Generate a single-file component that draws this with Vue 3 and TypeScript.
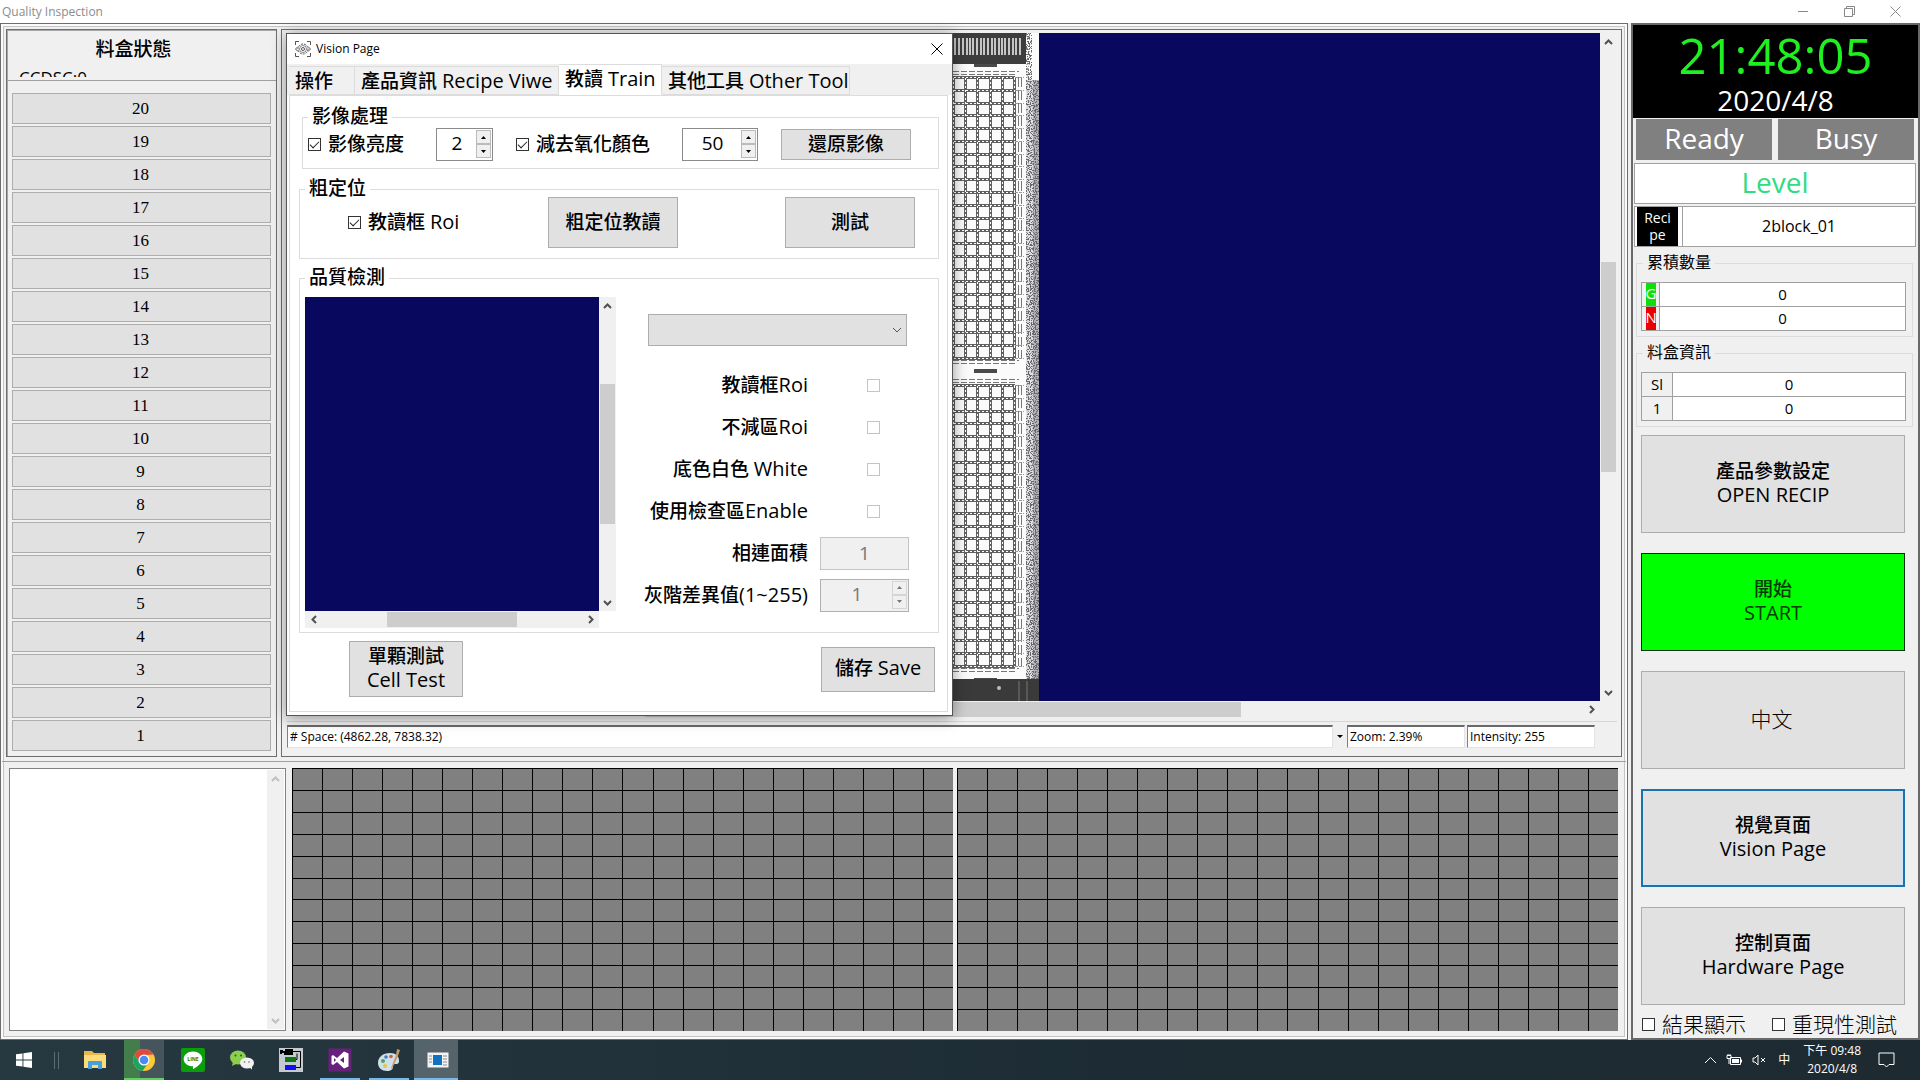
<script setup lang="ts">
import { ref } from 'vue'

const slots: number[] = Array.from({ length: 20 }, (_, i) => 20 - i)
const gridCells = 22 * 12

const brightnessOn = ref(true)
const oxideOn = ref(true)
const roiOn = ref(true)
const brightness = ref('2')
const oxide = ref('50')

const flags = [
  { id: 'teach-roi', zh: '教讀框', en: 'Roi' },
  { id: 'skip-roi', zh: '不減區', en: 'Roi' },
  { id: 'white-base', zh: '底色白色 ', en: 'White' },
  { id: 'use-area', zh: '使用檢查區', en: 'Enable' },
]

const actions = [
  { zh: '產品參數設定', en: 'OPEN RECIP', kind: '' },
  { zh: '開始', en: 'START', kind: 'start' },
  { zh: '中文', en: '', kind: 'lang' },
  { zh: '視覺頁面', en: 'Vision Page', kind: 'focused' },
  { zh: '控制頁面', en: 'Hardware Page', kind: '' },
]

// Die matrix drawn on the scanned strip
const pitchY = 281 / 22
const rowLines: number[] = Array.from({ length: 23 }, (_, i) => Math.round(i * pitchY))
const colLines: number[] = [0, 12, 24, 37, 49, 61]
const blocks: number[] = [44, 352]
const barcode: number[] = [2, 6, 10, 14, 17, 20, 24, 28, 31, 35, 39, 42, 46, 49, 52, 56, 60, 63, 67]
</script>

<template>
  <div class="desktop">
    <header class="titlebar">
      <span>Quality Inspection</span>
      <div class="win-controls">
        <button type="button" aria-label="Minimize"><svg width="11" height="11" viewBox="0 0 11 11"><path d="M0 5.5h10" /></svg></button>
        <button type="button" aria-label="Restore"><svg width="11" height="11" viewBox="0 0 11 11"><path d="M.5 2.5h8v8h-8zM2.500 2.500v-2h8v8h-2" /></svg></button>
        <button type="button" aria-label="Close"><svg width="11" height="11" viewBox="0 0 11 11"><path d="M.5.5l10 10M10.500.5l-10 10" /></svg></button>
      </div>
    </header>

    <div class="workspace">
      <main class="frame">
        <div class="upper">
          <section class="magazine">
            <div class="magazine-head">
              <h2>料盒狀態</h2>
              <p>CCDSC:0</p>
            </div>
            <div class="slot-list">
              <button v-for="n in slots" :key="n" type="button" class="slot">{{ n }}</button>
            </div>
          </section>

          <section class="viewer">
            <div class="view-grid">
              <div class="canvas">
                <svg class="scan" width="86" height="668" viewBox="0 0 86 668" preserveAspectRatio="none">
                  <defs>
                    <filter id="grain" x="0" y="0" width="100%" height="100%" color-interpolation-filters="sRGB">
                      <feTurbulence type="fractalNoise" baseFrequency="0.8" numOctaves="1" seed="4" />
                      <feColorMatrix values="0 0 0 0 .4  0 0 0 0 .4  0 0 0 0 .42  14 0 0 0 -6.800" />
                    </filter>
                    <g id="dies" fill="none">
                      <path d="M0-5.500H66M0-2.500H62M0 283.500H66M0 286.500H62" stroke="#777" stroke-dasharray="6 2" />
                      <g stroke="#606060" stroke-width="3">
                        <path v-for="y in rowLines" :key="'r' + y" :d="`M0 ${y + 0.5}H62`" />
                        <path v-for="x in colLines" :key="'c' + x" :d="`M${x + 0.5} 0V281`" />
                      </g>
                      <g stroke="#fff" stroke-dasharray="2 2">
                        <path v-for="y in rowLines" :key="'rd' + y" :d="`M1 ${y + 0.5}H62`" />
                        <path v-for="x in colLines" :key="'cd' + x" :d="`M${x + 0.5} 1V281`" />
                      </g>
                      <path d="M65.500 0V281M68.500 0V281" stroke="#777" stroke-dasharray="10 3" />
                      <path v-for="y in rowLines" :key="'t' + y" :d="`M62 ${y + 0.5}h9`" stroke="#999" stroke-dasharray="3 1" />
                    </g>
                  </defs>
                  <rect width="86" height="668" fill="#fbfbfb" />
                  <rect width="73" height="31" fill="#3d3d3d" />
                  <path v-for="x in barcode" :key="x" :d="`M${x} 5V22`" stroke="#f4f4f4" stroke-width="1.500" />
                  <path d="M21 31h23v3H21zM21 336h23v4H21zM21 645h23v2H21z" fill="#4a4a4a" />
                  <use v-for="y in blocks" :key="y" href="#dies" :y="y" />
                  <rect x="73" y="47" width="13" height="600" fill="#e2e2e2" />
                  <rect x="80" y="47" width="6" height="600" fill="#b4b4bc" />
                  <rect x="73" y="0" width="6" height="47" filter="url(#grain)" />
                  <rect x="73" y="47" width="13" height="600" filter="url(#grain)" />
                  <rect y="646" width="86" height="22" fill="#3a3a3a" />
                  <path d="M74 648v20M66 648v20" stroke="#777" />
                  <circle cx="46" cy="655" r="2" fill="#bbb" />
                </svg>
              </div>
              <div class="scroll vertical">
                <button type="button" aria-label="Scroll up"><svg width="9" height="6" viewBox="0 0 9 6"><path d="M1 5l3.500-3.500L8 5" /></svg></button>
                <div class="track"><i style="flex-grow: 212"></i><b style="flex-grow: 210"></b><i style="flex-grow: 212"></i></div>
                <button type="button" aria-label="Scroll down"><svg width="9" height="6" viewBox="0 0 9 6"><path d="M1 1l3.500 3.500L8 1" /></svg></button>
              </div>
              <div class="scroll horizontal">
                <button type="button" aria-label="Scroll left"><svg width="6" height="9" viewBox="0 0 6 9"><path d="M5 1L1.500 4.500 5 8" /></svg></button>
                <div class="track"><i style="flex-grow: 341"></i><b style="flex-grow: 596"></b><i style="flex-grow: 342"></i></div>
                <button type="button" aria-label="Scroll right"><svg width="6" height="9" viewBox="0 0 6 9"><path d="M1 1l3.500 3.500L1 8" /></svg></button>
              </div>
            </div>
            <div class="status">
              <span class="well wide"># Space: (4862.28, 7838.32)</span>
              <button type="button" class="drop" aria-label="Units"><svg width="6" height="3" viewBox="0 0 6 3"><path d="M0 0h6L3 3z" /></svg></button>
              <span class="well zoom">Zoom: 2.39%</span>
              <span class="well intensity">Intensity: 255</span>
            </div>

            <div class="dialog" role="dialog" aria-labelledby="dialog-title">
              <div class="dialog-title">
                <svg width="16" height="16" viewBox="0 0 16 16" fill="none" stroke="#555">
                  <path d="M.5 4V.5H4M12 .5h3.500V4M15.500 12v3.500H12M4 15.500H.5V12" />
                  <circle cx="8" cy="8" r="5" stroke-dasharray="2 1" />
                  <circle cx="8" cy="8" r="1.500" />
                  <circle cx="8" cy="8" r="3.500" stroke-width=".7" />
                  <path d="M.5 8L3 5.500M.5 8L3 10.500M15.500 8L13 5.500M15.500 8L13 10.500" />
                </svg>
                <span id="dialog-title">Vision Page</span>
                <button type="button" aria-label="Close"><svg width="12" height="12" viewBox="0 0 12 12"><path d="M.5.5l11 11M11.500.5l-11 11" /></svg></button>
              </div>
              <div class="tabs" role="tablist">
                <button type="button" role="tab" class="tab t-op">操作</button>
                <button type="button" role="tab" class="tab t-info">產品資訊 <span class="en">Recipe Viwe</span></button>
                <button type="button" role="tab" class="tab t-train active" aria-selected="true">教讀 <span class="en">Train</span></button>
                <button type="button" role="tab" class="tab t-tool">其他工具 <span class="en">Other Tool</span></button>
              </div>
              <div class="page">
                <fieldset class="group image-group">
                  <legend>影像處理</legend>
                  <div class="row image-row">
                    <label class="check"><input v-model="brightnessOn" type="checkbox" /><span>影像亮度</span></label>
                    <div class="spin narrow">
                      <input v-model="brightness" type="text" aria-label="影像亮度" />
                      <div class="arrows">
                        <button type="button" aria-label="Increase"><svg width="5" height="3" viewBox="0 0 5 3"><path d="M0 3h5L2.500 0z" /></svg></button>
                        <button type="button" aria-label="Decrease"><svg width="5" height="3" viewBox="0 0 5 3"><path d="M0 0h5L2.500 3z" /></svg></button>
                      </div>
                    </div>
                    <label class="check"><input v-model="oxideOn" type="checkbox" /><span>減去氧化顏色</span></label>
                    <div class="spin">
                      <input v-model="oxide" type="text" aria-label="減去氧化顏色" />
                      <div class="arrows">
                        <button type="button" aria-label="Increase"><svg width="5" height="3" viewBox="0 0 5 3"><path d="M0 3h5L2.500 0z" /></svg></button>
                        <button type="button" aria-label="Decrease"><svg width="5" height="3" viewBox="0 0 5 3"><path d="M0 0h5L2.500 3z" /></svg></button>
                      </div>
                    </div>
                    <button type="button" class="btn low">還原影像</button>
                  </div>
                </fieldset>

                <fieldset class="group coarse-group">
                  <legend>粗定位</legend>
                  <div class="row coarse-row">
                    <label class="check"><input v-model="roiOn" type="checkbox" /><span>教讀框 <span class="en">Roi</span></span></label>
                    <button type="button" class="btn tall">粗定位教讀</button>
                    <button type="button" class="btn tall last">測試</button>
                  </div>
                </fieldset>

                <fieldset class="group quality-group">
                  <legend>品質檢測</legend>
                  <div class="quality">
                    <div class="view-grid preview">
                      <div class="canvas"></div>
                      <div class="scroll vertical">
                        <button type="button" aria-label="Scroll up"><svg width="9" height="6" viewBox="0 0 9 6"><path d="M1 5l3.500-3.500L8 5" /></svg></button>
                        <div class="track"><i style="flex-grow: 70"></i><b style="flex-grow: 140"></b><i style="flex-grow: 70"></i></div>
                        <button type="button" aria-label="Scroll down"><svg width="9" height="6" viewBox="0 0 9 6"><path d="M1 1l3.500 3.500L8 1" /></svg></button>
                      </div>
                      <div class="scroll horizontal">
                        <button type="button" aria-label="Scroll left"><svg width="6" height="9" viewBox="0 0 6 9"><path d="M5 1L1.500 4.500 5 8" /></svg></button>
                        <div class="track"><i style="flex-grow: 65"></i><b style="flex-grow: 130"></b><i style="flex-grow: 65"></i></div>
                        <button type="button" aria-label="Scroll right"><svg width="6" height="9" viewBox="0 0 6 9"><path d="M1 1l3.500 3.500L1 8" /></svg></button>
                      </div>
                    </div>
                    <div class="params">
                      <div class="combo">
                        <select disabled aria-label="品質檢測"></select>
                        <svg width="10" height="6" viewBox="0 0 10 6"><path d="M1 1l4 4 4-4" /></svg>
                      </div>
                      <div class="param-list">
                        <template v-for="f in flags" :key="f.id">
                          <label :for="f.id">{{ f.zh }}<span class="en">{{ f.en }}</span></label>
                          <input :id="f.id" type="checkbox" disabled />
                        </template>
                        <label for="area">相連面積</label>
                        <input id="area" class="plain" type="text" value="1" disabled />
                        <label for="grey-diff">灰階差異值<span class="en">(1~255)</span></label>
                        <div class="spin off">
                          <input id="grey-diff" type="text" value="1" disabled />
                          <div class="arrows">
                            <button type="button" disabled aria-label="Increase"><svg width="5" height="3" viewBox="0 0 5 3"><path d="M0 3h5L2.500 0z" /></svg></button>
                            <button type="button" disabled aria-label="Decrease"><svg width="5" height="3" viewBox="0 0 5 3"><path d="M0 0h5L2.500 3z" /></svg></button>
                          </div>
                        </div>
                      </div>
                    </div>
                  </div>
                </fieldset>

                <div class="page-foot">
                  <button type="button" class="btn cell-test">單顆測試<br /><span class="en">Cell Test</span></button>
                  <button type="button" class="btn save">儲存 <span class="en">Save</span></button>
                </div>
              </div>
            </div>
          </section>
        </div>

        <div class="lower">
          <div class="log">
            <div class="scroll vertical idle">
              <button type="button" disabled aria-label="Scroll up"><svg width="9" height="6" viewBox="0 0 9 6"><path d="M1 5l3.500-3.500L8 5" /></svg></button>
              <button type="button" disabled aria-label="Scroll down"><svg width="9" height="6" viewBox="0 0 9 6"><path d="M1 1l3.500 3.500L8 1" /></svg></button>
            </div>
          </div>
          <div v-for="m in 2" :key="m" class="map"><i v-for="c in gridCells" :key="c"></i></div>
        </div>
      </main>

      <aside class="side">
        <div class="clock">
          <time class="time">21:48:05</time>
          <time class="date">2020/4/8</time>
        </div>
        <div class="lamps"><span>Ready</span><span>Busy</span></div>
        <div class="level">Level</div>
        <div class="recipe"><span class="recipe-tag"><b>Reci<br />pe</b></span><span class="recipe-name">2block_01</span></div>
        <fieldset class="group side-group">
          <legend>累積數量</legend>
          <table class="counts">
            <tbody>
              <tr><th scope="row"><span class="good">G</span></th><td>0</td></tr>
              <tr><th scope="row"><span class="bad">N</span></th><td>0</td></tr>
            </tbody>
          </table>
        </fieldset>
        <fieldset class="group side-group">
          <legend>料盒資訊</legend>
          <table class="info">
            <tbody>
              <tr><th scope="row">Sl</th><td>0</td></tr>
              <tr><th scope="row">1</th><td>0</td></tr>
            </tbody>
          </table>
        </fieldset>
        <div class="actions">
          <button v-for="a in actions" :key="a.zh" type="button" class="btn big" :class="a.kind">
            {{ a.zh }}<template v-if="a.en"><br /><span class="en">{{ a.en }}</span></template>
          </button>
        </div>
        <div class="toggles">
          <label><input type="checkbox" />結果顯示</label>
          <label><input type="checkbox" />重現性測試</label>
        </div>
      </aside>
    </div>

    <footer class="taskbar">
      <button type="button" class="start-menu" aria-label="Start">
        <svg width="16" height="16" viewBox="0 0 16 16" fill="#fff"><path d="M0 2.300L6.500 1.400v6.100H0zM7.400 1.300L16 0v7.500H7.400zM0 8.400h6.500v6.200L0 13.700zM7.400 8.400H16V16l-8.600-1.200z" /></svg>
      </button>
      <span class="grip"></span>
      <div class="apps">
        <button type="button" aria-label="File Explorer">
          <svg width="24" height="24" viewBox="0 0 24 24"><path d="M1 3h8l2 2h11v15H1z" fill="#e9b64c" /><path d="M1 7h22v13H1z" fill="#fbdc7c" /><path d="M5 21v-7q0-1 1-1h12q1 0 1 1v7h-4v-4H9v4z" fill="#4b9fd8" /></svg>
        </button>
        <button type="button" class="chrome" aria-label="Chrome">
          <svg width="24" height="24" viewBox="0 0 24 24"><circle cx="12" cy="12" r="11" fill="#fbc937" /><path d="M2.500 6.500A11 11 0 0 1 21.500 6.500L12 7 7.500 14.500z" fill="#dd4b3e" /><path d="M2.500 6.500A11 11 0 0 0 10.500 22.900L16.500 14.500H7.500z" fill="#1da462" /><circle cx="12" cy="12" r="5.500" fill="#fff" /><circle cx="12" cy="12" r="4.300" fill="#4a8af4" /></svg>
        </button>
        <button type="button" aria-label="LINE">
          <svg width="24" height="24" viewBox="0 0 24 24"><rect width="24" height="24" rx="2" fill="#0a9f0a" /><path d="M12 3.500c5.200 0 9.300 3.300 9.300 7.400 0 3.600-4 6.800-8.800 10.100-.8.400-.6-.7-.5-2.700C6.800 18.300 2.700 15 2.700 10.900S6.800 3.500 12 3.500z" fill="#fff" /><text x="12" y="13" text-anchor="middle" font-size="5" font-weight="700" fill="#0a7f0a">LINE</text></svg>
        </button>
        <button type="button" aria-label="WeChat">
          <svg width="24" height="24" viewBox="0 0 24 24"><ellipse cx="8" cy="9.500" rx="8" ry="7" fill="#8ccf4d" /><path d="M3 14l-1 4 4-2z" fill="#8ccf4d" /><circle cx="5.500" cy="7.500" r="1" fill="#37521d" /><circle cx="11" cy="7.500" r="1" fill="#37521d" /><ellipse cx="17" cy="15" rx="7" ry="5.500" fill="#f2f2f2" /><path d="M19 19l3 2.500v-4z" fill="#f2f2f2" /><circle cx="14.500" cy="14" r=".8" fill="#666" /><circle cx="19" cy="14" r=".8" fill="#666" /></svg>
        </button>
        <button type="button" aria-label="Camera tool">
          <svg width="24" height="24" viewBox="0 0 24 24"><path d="M0 0h24v24H0z" fill="#c5c9d0" /><path d="M1 2h3v1h2V1h8v6H5V5H3v1H1z" /><path d="M6 9h11v5H6z" fill="#087a10" /><path d="M6 17h11v5H6z" fill="#1010f0" /><path d="M14 3.500h7.500v16H17M18 5.500v6h-1" fill="none" stroke="#000" /></svg>
        </button>
        <button type="button" class="running" aria-label="Visual Studio">
          <svg width="24" height="24" viewBox="0 0 24 24"><path d="M.5.500h23v23H.5z" fill="#68217a" /><path d="M16 3.500l4.500 2v13l-4.500 2-7-6.500-4 3-1.500-1V8l1.500-1 4 3zM16 9l-4 3 4 3zM6 10v4l2-2z" fill="#fff" fill-rule="evenodd" /></svg>
        </button>
        <button type="button" class="running" aria-label="Paint">
          <svg width="24" height="24" viewBox="0 0 24 24"><path d="M1 15C1 9 6 5 13 5c6 0 9 3 9 8 0 3-2 3-4 3s-2 1-2 3-2 4-6 4c-5 0-9-3-9-8z" fill="#cfe0ea" /><circle cx="6" cy="13" r="2" fill="#57a25a" /><circle cx="9" cy="9" r="1.800" fill="#3e7fc4" /><circle cx="14" cy="8.500" r="1.800" fill="#d75b45" /><circle cx="8" cy="18" r="2" fill="#e3c34a" /><path d="M20 1l3 1-2 6-6 13-1-1 5-13z" fill="#c59a68" /></svg>
        </button>
        <button type="button" class="running current" aria-label="Vision application">
          <svg width="22" height="16" viewBox="0 0 22 16"><path d="M.5.500h21v15H.5z" fill="#f3f3f3" /><path d="M6 3h9v10H6z" fill="#1172c4" /><path d="M2 4h3M2 7h3M2 10h3M16 4h4M16 7h4M16 10h4M16 13h4" stroke="#8a8a8a" /></svg>
        </button>
      </div>
      <div class="tray">
        <svg width="13" height="8" viewBox="0 0 13 8"><path d="M1 7l5.500-5.500L12 7" /></svg>
        <svg width="17" height="12" viewBox="0 0 17 12"><path d="M4.500 3.500h10v7h-10z" /><path d="M6 5h7v4H6z" fill="#fff" stroke="none" /><path d="M15.500 5.500v3M1 1.500h4v3H1zM2 0v1M4 0v1M3 5v5" /></svg>
        <svg width="15" height="12" viewBox="0 0 15 12"><path d="M1 4v4h2l3 3V1L3 4zM9 4l4 4M13 4L9 8" /></svg>
        <span class="ime">中</span>
        <time class="tray-clock">下午 09:48<br />2020/4/8</time>
        <svg class="notes" width="17" height="17" viewBox="0 0 17 17"><path d="M1 1h15v11.500h-5L8.500 15 6 12.500H1z" /></svg>
      </div>
    </footer>
  </div>
</template>

<style>
body {
  background: #f0f0f0;
}
</style>

<style scoped>
* {
  box-sizing: border-box;
}

.desktop {
  display: flex;
  flex-direction: column;
  min-height: 100vh;
  background: #f0f0f0;
  color: #000;
  font-family: "Open Sans", "Noto Sans CJK TC", sans-serif;
  font-size: 19px;
  line-height: 24px;
}

button,
input,
select {
  font: inherit;
  color: inherit;
  margin: 0;
  padding: 0;
}

button {
  border: 0;
  background: none;
}

svg {
  display: block;
  flex: none;
}

.en {
  font-size: 20px;
}

/* Application title bar */
.titlebar {
  display: flex;
  justify-content: space-between;
  align-items: center;
  height: 23px;
  padding: 0 2px;
  background: #fff;
  color: #8c8c8c;
  font-size: 12px;
}

.win-controls {
  display: flex;
  height: 21px;
  align-items: center;
}

.win-controls button {
  display: grid;
  place-items: center;
  width: 46px;
}

.win-controls svg,
.dialog-title button svg {
  fill: none;
  stroke: #888;
}

.workspace {
  display: flex;
  flex: 1;
  gap: 3px;
}

.frame {
  display: flex;
  flex-direction: column;
  flex: 1;
  min-width: 0;
  padding: 5px 5px 8px;
  border: 1px solid #6d6d6d;
  box-shadow: inset 0 0 0 2px #fafafa, inset 0 0 0 3px #c4c4c4;
}

.upper {
  display: flex;
  gap: 4px;
}

/* Magazine slots */
.magazine {
  width: 271px;
  border: 1px solid #6d6d6d;
  box-shadow: inset 1px 1px 0 #a8a8a8;
}

.magazine-head {
  height: 51px;
  padding-top: 7px;
  border-bottom: 1px solid #a0a0a0;
}

.magazine-head h2 {
  margin: 0;
  padding-right: 16px;
  font-size: 19px;
  font-weight: 500;
  line-height: 24px;
  text-align: center;
}

.magazine-head p {
  height: 16px;
  margin: 0;
  padding: 6px 0 0 12px;
  overflow: hidden;
  font-size: 17px;
  line-height: 22px;
}

.slot-list {
  display: flex;
  flex-direction: column;
  gap: 2px;
  padding: 12px 5px 5px;
}

.slot {
  height: 31px;
  padding-right: 2px;
  border: 1px solid #adadad;
  background: #e1e1e1;
  font-family: "Liberation Serif", serif;
  font-size: 17px;
}

/* Image viewer */
.viewer {
  position: relative;
  display: flex;
  flex-direction: column;
  flex: 1;
  min-width: 0;
  padding: 3px 4px 5px 5px;
  border: 1px solid #6d6d6d;
}

.view-grid {
  display: grid;
  flex: 1;
  grid-template-columns: 1fr 17px;
  grid-template-rows: 1fr 17px;
}

.canvas {
  display: flex;
  background: #08085f;
}

.scan {
  height: 100%;
  margin-left: 666px;
}

.scroll {
  display: flex;
  justify-content: space-between;
  background: #f0f0f0;
}

.scroll.vertical,
.scroll.vertical .track {
  flex-direction: column;
}

.scroll button {
  display: grid;
  flex: none;
  place-items: center;
  width: 17px;
  height: 17px;
}

.scroll svg {
  fill: none;
  stroke: #505050;
  stroke-width: 2;
}

.track {
  display: flex;
  flex: 1;
}

.track i,
.track b {
  flex-basis: 0;
}

.track b {
  margin: 1px 0;
  background: #cdcdcd;
}

.vertical .track b {
  margin: 0 1px;
}

.idle svg {
  stroke: #bfbfbf;
}

.status {
  display: flex;
  height: 30px;
  margin-top: 3px;
  padding: 3px 22px 3px 0;
  border-top: 1px solid #d5d5d5;
  font-size: 12px;
}

.well {
  height: 23px;
  padding-left: 2px;
  border: 1px solid #e3e3e3;
  border-top: 2px solid #696969;
  border-left-color: #808080;
  background: #fff;
  line-height: 20px;
}

.wide {
  flex: 1;
}

.drop {
  display: grid;
  place-items: center;
  width: 14px;
}

.zoom {
  width: 118px;
}

.intensity {
  width: 128px;
  margin-left: 2px;
}

/* Floating vision window */
.dialog {
  position: absolute;
  top: 3px;
  left: 4px;
  display: flex;
  flex-direction: column;
  width: 667px;
  height: 683px;
  border: 1px solid #555;
  background: #fff;
  box-shadow: 0 2px 14px rgba(0, 0, 0, 0.4);
  font-weight: 500;
}

.dialog-title {
  display: flex;
  align-items: center;
  gap: 5px;
  height: 30px;
  padding: 0 9px 0 8px;
  font-size: 12px;
  font-weight: 400;
}

.dialog-title button {
  margin-left: auto;
}

.dialog-title button svg {
  stroke: #000;
}

.tabs {
  display: flex;
  align-items: flex-end;
  height: 31px;
  padding-left: 2px;
  background: #f0f0f0;
}

.tab {
  height: 29px;
  padding-left: 6px;
  border: 1px solid #dcdcdc;
  border-left: 0;
  text-align: left;
  white-space: nowrap;
}

.tab.active {
  height: 31px;
  padding-bottom: 2px;
  border-bottom-color: #fff;
  background: #fff;
}

.t-op {
  width: 66px;
}

.t-info {
  width: 204px;
}

.t-train {
  width: 103px;
}

.t-tool {
  width: 188px;
}

.page {
  flex: 1;
  margin: 0 4px 3px 2px;
  padding: 13px 8px 0 9px;
  border: 1px solid #dcdcdc;
}

.group {
  min-width: 0;
  margin: 0;
  padding: 0;
  border: 1px solid #dcdcdc;
}

.group legend {
  height: 16px;
  margin-left: 5px;
  padding: 0 4px;
  line-height: 14px;
}

.row {
  display: flex;
  align-items: center;
}

.check {
  display: flex;
  align-items: center;
  gap: 7px;
}

.check > span {
  padding-bottom: 2px;
  white-space: nowrap;
}

.check input,
.param-list input[type="checkbox"],
.toggles input {
  appearance: none;
  flex: none;
  width: 13px;
  height: 13px;
  border: 1px solid #333;
  background: #fff;
}

.check input:checked::before {
  content: "";
  display: block;
  width: 8px;
  height: 4px;
  margin: 2px 1px;
  border: solid #222;
  border-width: 0 0 1px 1px;
  transform: rotate(-45deg);
}

.image-group {
  margin-left: 3px;
}

.image-row {
  gap: 23px;
  padding: 3px 0 7px 5px;
}

.image-row .check {
  margin-right: 9px;
}

.spin {
  display: flex;
  width: 76px;
  height: 33px;
  padding: 1px;
  border: 1px solid #8a8a8a;
  background: #fff;
}

.spin.narrow {
  width: 57px;
}

.spin input {
  flex: 1;
  width: 0;
  height: 26px;
  border: 0;
  background: none;
  text-align: center;
}

.arrows {
  display: flex;
  flex-direction: column;
  width: 15px;
  height: 28px;
}

.arrows button {
  display: grid;
  flex: 1;
  place-items: center;
  border: 1px solid #bbb;
  background: #f0f0f0;
}

.btn {
  padding-bottom: 2px;
  border: 1px solid #adadad;
  background: #e1e1e1;
  font-weight: 500;
  line-height: 24px;
}

.low {
  width: 130px;
  height: 31px;
}

.coarse-group {
  margin-top: 12px;
}

.coarse-row {
  padding: 0 23px 10px 48px;
}

.coarse-row .check {
  width: 200px;
}

.tall {
  width: 130px;
  height: 51px;
}

.last {
  margin-left: auto;
}

.quality-group {
  margin-top: 11px;
}

.quality {
  display: flex;
  padding: 11px 0 4px 5px;
}

.preview {
  flex: none;
  width: 311px;
  height: 331px;
}

.params {
  flex: 1;
}

.combo {
  display: flex;
  align-items: center;
  height: 32px;
  margin: 17px 31px 18px 32px;
  padding-right: 4px;
  border: 1px solid #adadad;
  background: #e1e1e1;
}

.combo select {
  appearance: none;
  flex: 1;
  height: 30px;
  border: 0;
  background: none;
}

.combo svg {
  fill: none;
  stroke: #555;
}

.param-list {
  display: grid;
  grid-template-columns: 1fr 89px;
  grid-auto-rows: 42px;
  column-gap: 12px;
  align-items: center;
  padding-right: 29px;
}

.param-list label {
  padding-bottom: 1px;
  text-align: right;
  white-space: nowrap;
}

.param-list input[type="checkbox"] {
  margin-left: 47px;
  border-color: #c4c4c4;
}

.plain {
  width: 89px;
  height: 33px;
  border: 1px solid #c4c4c4;
  background: #f0f0f0;
  color: #777;
  text-align: center;
}

.spin.off {
  width: 89px;
  border-color: #b0b0b0;
  background: #f0f0f0;
  color: #777;
}

.spin.off button {
  border-color: #d5d5d5;
}

.spin.off svg {
  fill: #777;
}

.page-foot {
  display: flex;
  justify-content: space-between;
  align-items: center;
  padding: 8px 4px 0 50px;
}

.cell-test {
  width: 114px;
  height: 56px;
}

.save {
  width: 114px;
  height: 45px;
}

/* Log and result maps */
.lower {
  display: flex;
  flex: 1;
  gap: 4px;
  margin: 4px -4px 0;
  padding: 6px 8px 0 7px;
  border-top: 1px solid #a0a0a0;
}

.log {
  display: flex;
  justify-content: flex-end;
  width: 277px;
  margin-right: 2px;
  padding: 1px;
  border: 1px solid #828282;
  background: #fff;
}

.map {
  display: grid;
  flex: 1;
  grid-template-columns: repeat(22, 1fr);
  grid-template-rows: repeat(12, 1fr);
  background: #808080;
}

.map i {
  border-top: 1px solid #000;
  border-left: 1px solid #000;
}

/* Control column */
.side {
  display: flex;
  flex-direction: column;
  width: 289px;
  border: 2px solid #696969;
}

.clock {
  display: flex;
  flex-direction: column;
  align-items: center;
  height: 93px;
  background: #000;
}

.time {
  color: #1ff01f;
  font-size: 49px;
  font-weight: 500;
  line-height: 60px;
}

.date {
  color: #fff;
  font-size: 28px;
  font-weight: 500;
  line-height: 30px;
}

.lamps {
  display: flex;
  gap: 6px;
  padding: 1px 4px 3px 3px;
}

.lamps span {
  flex: 1;
  height: 41px;
  background: #808080;
  color: #fff;
  font-size: 28px;
  font-weight: 500;
  line-height: 38px;
  text-align: center;
}

.level {
  height: 41px;
  margin: 0 2px 2px 1px;
  border: 1px solid #a0a0a0;
  background: #fff;
  color: #2fdd7f;
  font-size: 28px;
  font-weight: 500;
  line-height: 36px;
  text-align: center;
}

.recipe {
  display: flex;
  height: 41px;
  margin: 0 2px 8px 1px;
  border: 1px solid #a0a0a0;
  background: #fff;
}

.recipe-tag {
  width: 48px;
  padding: 0 4px 0 2px;
  border-right: 1px solid #a0a0a0;
}

.recipe-tag b {
  display: block;
  height: 39px;
  padding-top: 2px;
  background: #000;
  color: #fff;
  font-size: 14px;
  font-weight: 400;
  line-height: 17px;
  text-align: center;
}

.recipe-name {
  flex: 1;
  font-size: 16px;
  line-height: 39px;
  text-align: center;
}

.side-group {
  margin: 0 5px 8px 3px;
  padding: 11px 6px 5px 4px;
}

.side-group legend {
  margin-left: 2px;
  font-size: 16px;
}

.side table {
  width: 100%;
  border-collapse: collapse;
  table-layout: fixed;
  font-size: 15px;
  line-height: 20px;
}

.side th,
.side td {
  height: 24px;
  padding: 0 0 2px;
  border: 1px solid #a0a0a0;
  font-weight: 400;
  text-align: center;
}

.side .counts th {
  padding: 0;
}

.side td {
  background: #fff;
}

.counts th {
  width: 18px;
}

.info th {
  width: 31px;
}

.counts span {
  display: block;
  width: 10px;
  height: 23px;
  margin: 0 auto;
  overflow: hidden;
  color: #fff;
  line-height: 20px;
}

.good {
  background: #0be00b;
}

.bad {
  background: #e80000;
}

.actions {
  display: flex;
  flex-direction: column;
  gap: 20px;
  padding: 0 13px 0 8px;
}

.big {
  height: 98px;
}

.start {
  border-color: #063006;
  background: #0f0;
  color: #003c00;
}

.lang {
  padding-right: 3px;
  font-size: 21px;
  font-weight: 300;
}

.focused {
  border: 2px solid #1c72ac;
  box-shadow: inset 0 0 0 1px #cfe6f8;
}

.toggles {
  display: flex;
  justify-content: space-between;
  margin-top: 7px;
  padding: 0 21px 0 9px;
  font-size: 21px;
  font-weight: 300;
}

.toggles label {
  display: flex;
  align-items: center;
  gap: 7px;
}

/* Taskbar */
.taskbar {
  display: flex;
  align-items: center;
  height: 40px;
  background: linear-gradient(90deg, #263840, #1d2c34 60%, #1d2a31);
  color: #fff;
}

.start-menu {
  width: 54px;
  padding-left: 16px;
}

.grip {
  width: 5px;
  height: 17px;
  border: solid #5d6c73;
  border-width: 0 1px;
}

.apps {
  display: flex;
  gap: 9px;
  margin-left: 16px;
}

.apps button {
  display: grid;
  place-items: center;
  width: 40px;
  height: 40px;
}

.apps .chrome {
  background: linear-gradient(90deg, #437d4b 40%, #46555c 40%);
  box-shadow: inset 0 -2px 0 #5fd35f;
}

.apps .running {
  box-shadow: inset 0 -2px 0 #76b9ed;
}

.apps .current {
  width: 44px;
  margin-left: -4px;
  padding-left: 4px;
  background: #55636a;
}

.tray {
  display: flex;
  align-items: center;
  gap: 9px;
  margin-left: auto;
  padding-right: 9px;
  font-size: 12px;
  line-height: 18px;
}

.tray svg {
  fill: none;
  stroke: #fff;
}

.ime {
  margin: 0 4px 0 2px;
}

.tray-clock {
  text-align: center;
}

.tray .notes {
  margin: 0 16px 0 8px;
}
</style>
